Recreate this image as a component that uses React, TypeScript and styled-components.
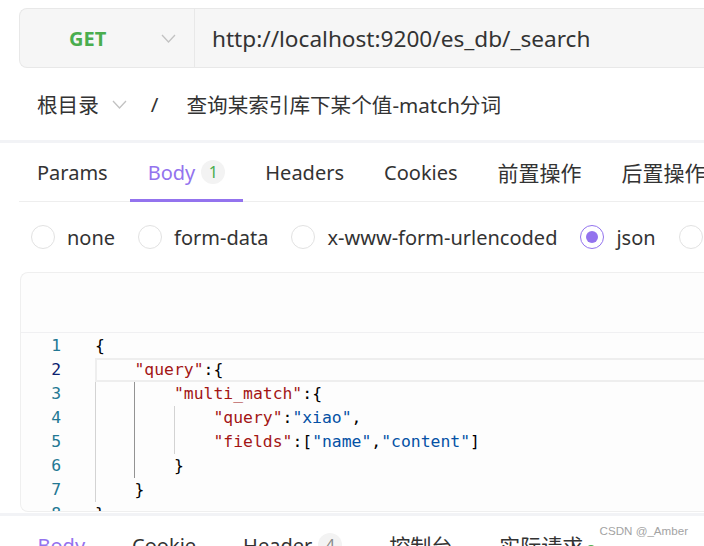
import React from 'react';
import styled, { createGlobalStyle } from 'styled-components';

const COLORS = {
  PURPLE: '#9373ee',
  GREEN: '#4aad4e',
  TEXT: '#333333',
  BORDER: '#e8e8e8',
  BAND: '#f2f3f6',
  KEY: '#a31515',
  STRING: '#0451a5',
  LINE_NO: '#237893',
  LINE_NO_ACTIVE: '#0b216f',
};

const UI_FONT = `"Noto Sans", "Noto Sans CJK SC", sans-serif`;
const CODE_FONT = `"DejaVu Sans Mono", monospace`;

const GlobalStyle = createGlobalStyle`
  html, body {
    margin: 0;
    padding: 0;
    background: #ffffff;
  }
  body {
    font-family: ${UI_FONT};
    color: ${COLORS.TEXT};
  }
`;

const Page = styled.div`
  width: 704px;
  height: 546px;
  overflow: hidden;
  position: relative;
  display: flex;
  flex-direction: column;
  background: #ffffff;
`;

const UrlBar = styled.div`
  margin: 8px 0 0 19px;
  height: 58px;
  display: flex;
  align-items: stretch;
  background: #f6f6f6;
  border: 1px solid ${COLORS.BORDER};
  border-right: none;
  border-radius: 8px 0 0 8px;
  flex-shrink: 0;
`;

const MethodSelect = styled.div`
  width: 175px;
  box-sizing: border-box;
  padding-left: 49px;
  display: flex;
  align-items: center;
  border-right: 1px solid ${COLORS.BORDER};
`;

const Method = styled.span`
  font-family: "Open Sans", "Noto Sans", sans-serif;
  font-weight: 700;
  font-size: 20px;
  color: ${COLORS.GREEN};
  width: 92px;
`;

const UrlText = styled.div`
  padding-left: 17px;
  display: flex;
  align-items: center;
  font-size: 22.6px;
  color: ${COLORS.TEXT};
  white-space: nowrap;
`;

const Breadcrumb = styled.div`
  height: 72px;
  display: flex;
  align-items: center;
  padding: 0 0 0 37px;
  box-sizing: border-box;
  font-size: 20.6px;
  color: ${COLORS.TEXT};
  white-space: nowrap;
  flex-shrink: 0;
`;

const Crumb = styled.span`
  display: flex;
  align-items: center;
  gap: 13px;
`;

const Slash = styled.span`
  margin: 0 28px 0 24px;
`;

const Band = styled.div`
  height: 3px;
  background: ${COLORS.BAND};
  flex-shrink: 0;
`;

const TabBar = styled.div`
  height: 58px;
  margin-left: 19px;
  display: flex;
  gap: 4px;
  border-bottom: 1px solid #eeeeee;
  flex-shrink: 0;
  white-space: nowrap;
`;

const Tab = styled.div<{ active?: boolean; wide?: boolean }>`
  position: relative;
  padding: 0 ${props => (props.wide ? 22.5 : 18)}px;
  display: flex;
  align-items: center;
  gap: 6px;
  font-size: 20px;
  color: ${props => (props.active ? COLORS.PURPLE : COLORS.TEXT)};
  ${props =>
    props.active &&
    `&::after {
      content: '';
      position: absolute;
      left: 0;
      right: 0;
      bottom: -1px;
      height: 3px;
      background: ${COLORS.PURPLE};
    }`}
`;

const CjkLabel = styled.span`
  font-family: "Noto Sans CJK SC", sans-serif;
  font-size: 21px;
`;

const Badge = styled.span<{ tone?: string }>`
  width: 24px;
  height: 24px;
  border-radius: 50%;
  background: #f3f3f3;
  color: ${props => props.tone || COLORS.GREEN};
  font-size: 16px;
  display: inline-flex;
  align-items: center;
  justify-content: center;
`;

const RadioRow = styled.div`
  height: 70px;
  padding-left: 31px;
  display: flex;
  align-items: center;
  gap: 23px;
  flex-shrink: 0;
  white-space: nowrap;
`;

const RadioItem = styled.label`
  display: flex;
  align-items: center;
  gap: 12px;
  font-size: 20px;
  color: ${COLORS.TEXT};
`;

const RadioCircle = styled.span<{ checked?: boolean }>`
  width: 24px;
  height: 24px;
  box-sizing: border-box;
  border-radius: 50%;
  border: 1px solid ${props => (props.checked ? COLORS.PURPLE : '#e2e2e2')};
  background: #ffffff;
  display: inline-flex;
  align-items: center;
  justify-content: center;
  flex-shrink: 0;
  &::after {
    content: '';
    width: 12px;
    height: 12px;
    border-radius: 50%;
    background: ${props => (props.checked ? COLORS.PURPLE : 'transparent')};
  }
`;

const Editor = styled.div`
  margin-left: 20px;
  height: 240px;
  box-sizing: border-box;
  border: 1px solid #efefef;
  border-right: none;
  border-radius: 8px 0 0 8px;
  background: #fdfdfd;
  display: flex;
  flex-direction: column;
  overflow: hidden;
  flex-shrink: 0;
`;

const EditorToolbar = styled.div`
  height: 59px;
  border-bottom: 1px solid #f0f0f2;
  flex-shrink: 0;
`;

const CodeArea = styled.div`
  padding-top: 1px;
  font-family: ${CODE_FONT};
  font-size: 16.4px;
`;

const CodeLine = styled.div`
  height: 24px;
  display: flex;
`;

const LineNo = styled.span<{ current?: boolean }>`
  width: 40px;
  line-height: 24px;
  text-align: right;
  color: ${props => (props.current ? COLORS.LINE_NO_ACTIVE : COLORS.LINE_NO)};
  flex-shrink: 0;
`;

const LineBody = styled.div<{ current?: boolean }>`
  margin-left: 34px;
  flex: 1;
  line-height: 24px;
  white-space: pre;
  position: relative;
  ${props =>
    props.current &&
    `box-shadow: inset 0 2px #eeeeee, inset 0 -2px #eeeeee, inset 2px 0 #eeeeee;`}
`;

const Guide = styled.span<{ level: number; strong?: boolean }>`
  position: absolute;
  top: 0;
  bottom: 0;
  left: calc(${props => props.level} * 4ch);
  width: 1px;
  background: ${props => (props.strong ? '#939393' : '#d3d3d3')};
`;

const Key = styled.span`
  color: ${COLORS.KEY};
`;

const Str = styled.span`
  color: ${COLORS.STRING};
`;

const Punct = styled.span`
  color: #000000;
`;

const BottomPanel = styled.div`
  margin-top: 1px;
  border-top: 3px solid ${COLORS.BAND};
  padding: 14px 0 0 15px;
  display: flex;
  gap: 2px;
  white-space: nowrap;
`;

const Dot = styled.span`
  width: 8px;
  height: 8px;
  border-radius: 50%;
  background: ${COLORS.GREEN};
  margin-left: -2px;
  margin-top: 8px;
`;

const Watermark = styled.div`
  position: absolute;
  right: 16px;
  bottom: 9px;
  font-family: "Liberation Sans", Arial, sans-serif;
  font-size: 11.6px;
  color: #a3a3a3;
`;

const Chevron = () => (
  <svg width="15" height="9" viewBox="0 0 15 9">
    <polyline points="1,1 7.5,8 14,1" fill="none" stroke="#c2c2c2" strokeWidth="1.3" />
  </svg>
);

type Guides = { level: number; strong?: boolean }[];

const lines: { content: React.ReactNode; guides: Guides; current?: boolean }[] = [
  { content: <Punct>{'{'}</Punct>, guides: [] },
  {
    content: (
      <>
        {'    '}
        <Key>"query"</Key>
        <Punct>:{'{'}</Punct>
      </>
    ),
    guides: [],
    current: true,
  },
  {
    content: (
      <>
        {'        '}
        <Key>"multi_match"</Key>
        <Punct>:{'{'}</Punct>
      </>
    ),
    guides: [{ level: 0 }, { level: 1, strong: true }],
  },
  {
    content: (
      <>
        {'            '}
        <Key>"query"</Key>
        <Punct>:</Punct>
        <Str>"xiao"</Str>
        <Punct>,</Punct>
      </>
    ),
    guides: [{ level: 0 }, { level: 1, strong: true }, { level: 2 }],
  },
  {
    content: (
      <>
        {'            '}
        <Key>"fields"</Key>
        <Punct>:[</Punct>
        <Str>"name"</Str>
        <Punct>,</Punct>
        <Str>"content"</Str>
        <Punct>]</Punct>
      </>
    ),
    guides: [{ level: 0 }, { level: 1, strong: true }, { level: 2 }],
  },
  {
    content: (
      <>
        {'        '}
        <Punct>{'}'}</Punct>
      </>
    ),
    guides: [{ level: 0 }, { level: 1, strong: true }],
  },
  {
    content: (
      <>
        {'    '}
        <Punct>{'}'}</Punct>
      </>
    ),
    guides: [{ level: 0 }],
  },
  { content: <Punct>{'}'}</Punct>, guides: [] },
];

const requestTabs = ['Params', 'Body', 'Headers', 'Cookies', '前置操作', '后置操作'];
const bodyTypes = ['none', 'form-data', 'x-www-form-urlencoded', 'json', 'xml'];

const isCjk = (s: string) => /[\u4e00-\u9fff]/.test(s);

export default function App() {
  return (
    <>
      <GlobalStyle />
      <Page>
        <UrlBar>
          <MethodSelect>
            <Method>GET</Method>
            <Chevron />
          </MethodSelect>
          <UrlText>http://localhost:9200/es_db/_search</UrlText>
        </UrlBar>

        <Breadcrumb>
          <Crumb>
            根目录
            <Chevron />
          </Crumb>
          <Slash>/</Slash>
          <span>查询某索引库下某个值-match分词</span>
        </Breadcrumb>

        <Band />

        <TabBar>
          {requestTabs.map(t => (
            <Tab key={t} active={t === 'Body'}>
              {isCjk(t) ? <CjkLabel>{t}</CjkLabel> : t}
              {t === 'Body' && <Badge>1</Badge>}
            </Tab>
          ))}
        </TabBar>

        <RadioRow>
          {bodyTypes.map(b => (
            <RadioItem key={b}>
              <RadioCircle checked={b === 'json'} />
              {b}
            </RadioItem>
          ))}
        </RadioRow>

        <Editor>
          <EditorToolbar />
          <CodeArea>
            {lines.map((l, i) => (
              <CodeLine key={i}>
                <LineNo current={l.current}>{i + 1}</LineNo>
                <LineBody current={l.current}>
                  {l.guides.map(g => (
                    <Guide key={g.level} level={g.level} strong={g.strong} />
                  ))}
                  {l.content}
                </LineBody>
              </CodeLine>
            ))}
          </CodeArea>
        </Editor>

        <BottomPanel>
          <Tab active wide>
            Body
          </Tab>
          <Tab wide>Cookie</Tab>
          <Tab wide>
            Header
            <Badge tone="#8a8a8a">4</Badge>
          </Tab>
          <Tab wide>
            <CjkLabel>控制台</CjkLabel>
          </Tab>
          <Tab wide>
            <CjkLabel>实际请求</CjkLabel>
            <Dot />
          </Tab>
        </BottomPanel>

        <Watermark>CSDN @_Amber</Watermark>
      </Page>
    </>
  );
}
